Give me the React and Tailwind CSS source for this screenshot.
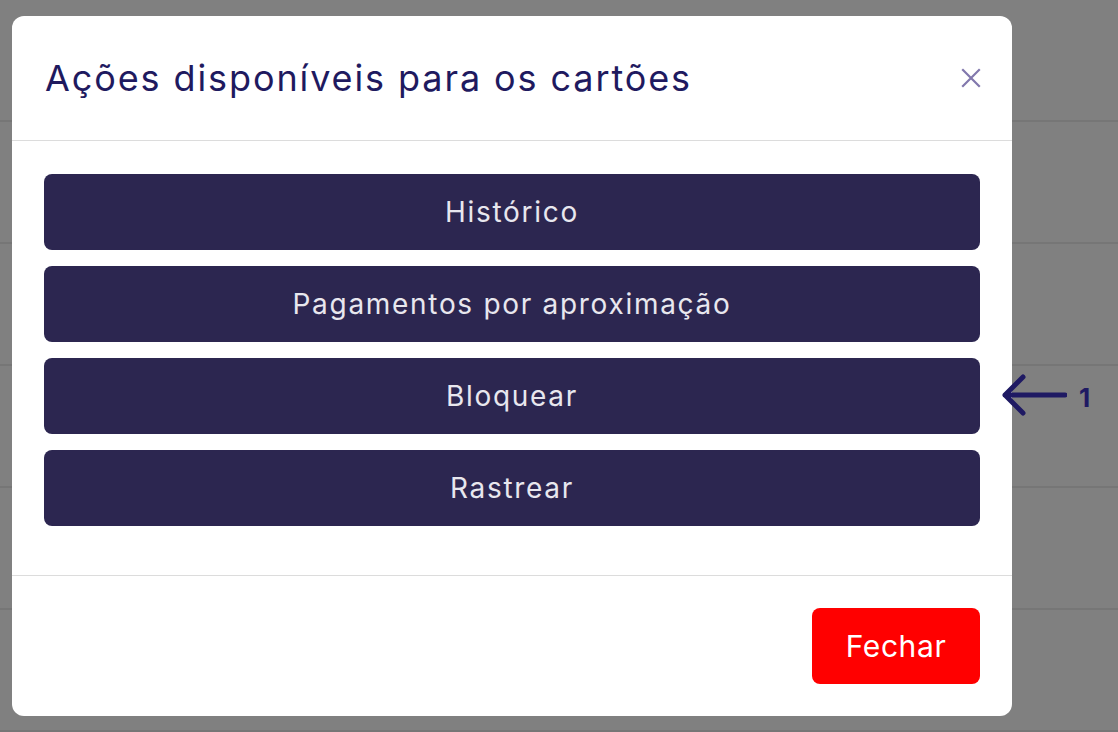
import React from "react";

const actions = ["Histórico", "Pagamentos por aproximação", "Bloquear", "Rastrear"];

const CloseIcon = () => (
  <svg width="20" height="20" viewBox="0 0 20 20" fill="none" stroke="#8278ad" strokeWidth="2.2" strokeLinecap="square">
    <path d="M2 2 L18 18 M18 2 L2 18" />
  </svg>
);

const ArrowLeft = () => (
  <svg width="66" height="48" viewBox="0 0 66 48" fill="none" stroke="#1f1a63" strokeWidth="5" strokeLinecap="round" strokeLinejoin="round">
    <path d="M64 22 L4 22 M22 4 L4 22 L22 40" />
  </svg>
);

export default function App() {
  return (
    <div className="relative h-[732px] w-[1118px] overflow-hidden bg-[#808080]" style={{ fontFamily: "Inter, 'Noto Sans', sans-serif" }}>
      {/* page rows behind the overlay */}
      <div className="flex flex-col">
        {[0, 1, 2, 3, 4, 5].map((i) => (
          <div key={i} className="h-[122px] border-b-2 border-[#767676]" />
        ))}
      </div>

      {/* modal */}
      <div className="absolute left-[12px] top-[16px] flex h-[700px] w-[1000px] flex-col rounded-[12px] bg-white">
        <div className="flex h-[125px] items-center justify-between border-b border-[#dcdcdc] pl-[33px] pr-[31px]">
          <h2 className="text-[36px] font-normal tracking-[1.9px] text-[#1f1a5f]">Ações disponíveis para os cartões</h2>
          <button className="flex items-center justify-center">
            <CloseIcon />
          </button>
        </div>

        <div className="flex flex-col gap-4 px-8 pb-[49px] pt-[33px]">
          {actions.map((a) => (
            <button
              key={a}
              className="flex h-[76px] items-center justify-center rounded-[8px] bg-[#2c2650] text-[28px] tracking-[1.7px] text-[#e8e7ee]"
            >
              {a}
            </button>
          ))}
        </div>

        <div className="flex justify-end border-t border-[#dcdcdc] px-8 pt-8">
          <button className="flex h-[76px] w-[168px] items-center justify-center rounded-[8px] bg-[#ff0000] text-[30px] tracking-[0.6px] text-white">
            Fechar
          </button>
        </div>
      </div>

      {/* annotation */}
      <div className="absolute left-[1001px] top-[373px] flex items-center gap-[12px]">
        <ArrowLeft />
        <span className="text-[26px] font-bold text-[#1f1a63]">1</span>
      </div>
    </div>
  );
}
